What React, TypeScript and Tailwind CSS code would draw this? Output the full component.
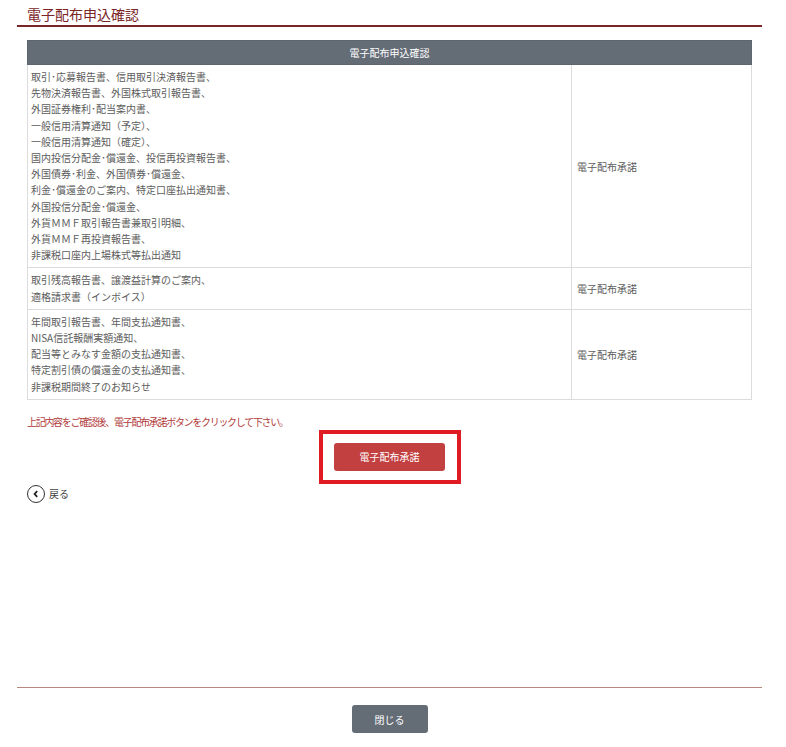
const font = { fontFamily: '"Noto Sans CJK JP", "Noto Sans", sans-serif' };

const rows = [
  {
    lines: [
      "取引･応募報告書、信用取引決済報告書、",
      "先物決済報告書、外国株式取引報告書、",
      "外国証券権利･配当案内書、",
      "一般信用清算通知（予定）、",
      "一般信用清算通知（確定）、",
      "国内投信分配金･償還金、投信再投資報告書、",
      "外国債券･利金、外国債券･償還金、",
      "利金･償還金のご案内、特定口座払出通知書、",
      "外国投信分配金･償還金、",
      "外貨ＭＭＦ取引報告書兼取引明細、",
      "外貨ＭＭＦ再投資報告書、",
      "非課税口座内上場株式等払出通知",
    ],
  },
  {
    lines: ["取引残高報告書、譲渡益計算のご案内、", "適格請求書（インボイス）"],
  },
  {
    lines: [
      "年間取引報告書、年間支払通知書、",
      "NISA信託報酬実額通知、",
      "配当等とみなす金額の支払通知書、",
      "特定割引債の償還金の支払通知書、",
      "非課税期間終了のお知らせ",
    ],
  },
];

export default function App() {
  return (
    <div className="flex min-h-screen flex-col bg-white pl-[17px] pr-[24px]" style={font}>
      <div className="border-b-2 border-[#7a2626] pl-[10px] pt-[5px] pb-[2px] text-[14px] leading-[18px] text-[#7a2626]">
        電子配布申込確認
      </div>

      <div className="mx-[10px] mt-[13px]">
        <table className="w-full border-collapse text-[10px] text-[#5c5c5c]">
          <thead>
            <tr>
              <th
                colSpan={2}
                className="h-[24px] border border-[#5d6670] bg-[#646c76] p-0 text-center font-normal text-white"
              >
                電子配布申込確認
              </th>
            </tr>
          </thead>
          <tbody>
            {rows.map((row, i) => (
              <tr key={i}>
                <td className="border border-[#dcdcdc] px-[3px] py-[4px] align-top leading-[16.2px]">
                  {row.lines.map((l) => (
                    <div key={l}>{l}</div>
                  ))}
                </td>
                <td className="w-[180px] border border-[#dcdcdc] px-[5px] align-middle">
                  電子配布承諾
                </td>
              </tr>
            ))}
          </tbody>
        </table>
      </div>

      <p className="mt-[15px] pl-[10px] text-[10px] leading-[14px] tracking-[-1.3px] text-[#b13c3c]">
        上記内容をご確認後、電子配布承諾ボタンをクリックして下さい。
      </p>

      <div className="mt-[1px] flex justify-center">
        <div className="flex h-[54px] w-[142px] items-center justify-center border-4 border-[#e11b24]">
          <button className="h-[28px] w-[111px] rounded-[3px] bg-[#c2403f] text-[10px] text-white">
            電子配布承諾
          </button>
        </div>
      </div>

      <div className="mt-[1px] flex items-center gap-[4px] pl-[10px]">
        <span className="flex h-[18px] w-[18px] items-center justify-center rounded-full border-[1.5px] border-[#333]">
          <svg width="8" height="8" viewBox="0 0 8 8">
            <path d="M5.2 1.2 L2.6 4 L5.2 6.8" fill="none" stroke="#222" strokeWidth="1.8" />
          </svg>
        </span>
        <span className="text-[10px] text-[#444]">戻る</span>
      </div>

      <div className="mt-auto border-t border-[#b5877f] pt-[17px] pb-[14px]">
        <div className="flex justify-center">
          <button className="h-[28px] w-[76px] rounded-[3px] bg-[#646c76] text-[10px] text-white">
            閉じる
          </button>
        </div>
      </div>
    </div>
  );
}
